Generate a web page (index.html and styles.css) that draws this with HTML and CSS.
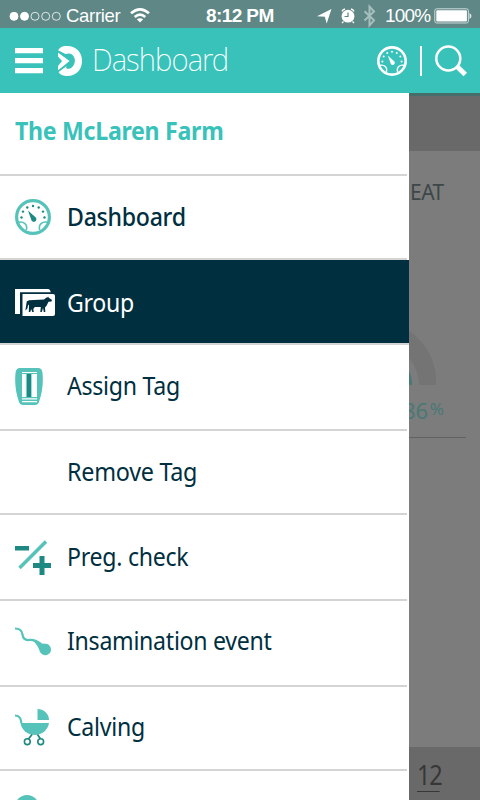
FILE: index.html
```html
<!DOCTYPE html>
<html lang="en">
<head>
<meta charset="utf-8">
<title>Dashboard</title>
<link rel="stylesheet" href="styles.css">
</head>
<body>
<div class="phone">
  <div class="status">
    <svg class="signal" width="53" height="28" viewBox="0 0 53 28"><g fill="#fff" stroke="#fff"><circle cx="5" cy="16.3" r="4"/><circle cx="15.5" cy="16.3" r="4"/><g fill="none" stroke-width=".8"><circle cx="26" cy="16.3" r="4"/><circle cx="36.7" cy="16.3" r="4"/><circle cx="47.3" cy="16.3" r="4"/></g></g></svg>
    <span class="carrier">Carrier</span>
    <svg class="wifi" width="20" height="28" viewBox="0 0 20 28" fill="none" stroke="#fff" stroke-width="2.6"><path d="M1 13.3Q10 5.500 19 13.300M4.700 17Q10 12.200 15.300 17"/><path d="M10 22.500 6.800 19.300Q10 17 13.200 19.300z" fill="#fff" stroke="none"/></svg>
    <span class="clock">8:12 PM</span>
    <svg class="stat-icons" width="62" height="28" viewBox="0 0 62 28"><path fill="#fff" d="M1 16.300 15.500 9 10.700 23.500 8.800 16.700z"/><circle cx="32" cy="16.200" r="6.400" fill="#fff"/><path d="M26 11.500Q26.500 9.500 29 9M38 11.500Q37.500 9.500 35 9M27.500 21.500l-1.500 1.500M36.500 21.500l1.500 1.500" fill="none" stroke="#fff" stroke-width="1.300"/><path d="M32 12.500v4h-3.500" fill="none" stroke="#5e8785" stroke-width="1.200"/><path d="m48.500 11.300 9.500 9-4.500 5V6.500l4.500 5-9.500 9" fill="none" stroke="#a6bfbd" stroke-width="2"/></svg>
    <span class="percent">100%</span>
    <svg class="battery" width="38" height="28" viewBox="0 0 38 28"><rect x=".8" y="8.800" width="33.600" height="14.200" rx="1.800" fill="none" stroke="#cddada"/><rect x="2.300" y="10.300" width="30.600" height="11.200" rx=".7" fill="#fff"/><path d="M35.500 13q2 1 2 3t-2 3z" fill="#d9e4e4"/></svg>
  </div>
  <header class="bar">
    <svg class="burger" width="28" height="26" viewBox="0 0 28 26" fill="#fff"><path d="M0 0h28v5.300H0zM0 10h28v5.300H0zM0 20h28v5.300H0z"/></svg>
    <svg class="brand" width="26" height="32" viewBox="0 0 26 32"><path fill="#fff" d="M1 5.200C4 1 7 1 10 1 20 1 25 8 25 16S20 31 10 31C6 31 3 29.500 1.500 27L10 20.800C7 24 12 25 15 22.200 19 18.500 18.700 12.500 15 9.500 13 8 11 8.300 8.500 9z"/><path fill="#fff" d="m1 7.500 11.500 8.600L1 25.500V21l4-5-4-4.500z"/><path d="m1 6.300 7 5.200M1.200 26.200l6.500-5" stroke="#38c2ba" stroke-width="1.200"/></svg>
    <h1>Dashboard</h1>
    <svg class="bar-gauge" width="30" height="30" viewBox="0 0 36 36"><use href="#gauge"/></svg>
    <i class="divider"></i>
    <svg class="search" width="32" height="32" viewBox="0 0 32 32" fill="none" stroke="#fff"><circle cx="13.300" cy="13.500" r="12" stroke-width="2.500"/><path d="m22 21.500 8.300 8" stroke-width="5"/></svg>
  </header>
  <main class="body">
    <nav class="menu">
      <div class="row title"><span>The McLaren Farm</span></div>
      <a class="row r-dash"><svg class="icon gauge" width="36" height="36" viewBox="0 0 36 36"><g id="gauge"><circle class="ring" cx="18" cy="18" r="16.400" fill="none" stroke-width="3.200"/><path class="ring" d="M3.500 23.200C8.500 22 13 25.500 11.300 31M32.500 23.200C27.500 22 23 25.500 24.700 31" fill="none" stroke-width="1.600"/><path class="needle" d="M13 11.500 20.200 18a2.600 2.600 0 1 1-4 2.400z"/><g class="needle"><circle cx="18" cy="7" r="1.200"/><circle cx="12.300" cy="8.500" r="1.200"/><circle cx="23.700" cy="8.500" r="1.200"/><circle cx="8" cy="12.600" r="1.200"/><circle cx="28" cy="12.600" r="1.200"/><circle cx="6.500" cy="18.500" r="1.200"/><circle cx="29.500" cy="18.500" r="1.200"/></g></g></svg><span>Dashboard</span></a>
      <a class="row r-group"><svg class="icon" width="40" height="28" viewBox="0 0 40 28"><path fill="#fff" d="M0 0h33q2 0 2.700 3.200H5V25H0z"/><path fill="#fff" d="M7.500 5H38q2 0 2 2v18q0 2-2 2H7.500z"/><path fill="#002f3f" d="M14 11.300 29 10.500l2.500-2h1l.5-1 .8 1.200L37 11l-.5 1.500-3 .3-2 4-1.500 1.700.3 4.500h-1.500l-.8-4-1.200 4h-1.500l.5-5h-6l-1.500 2 .5 3h-1.500l-1.200-3-.8 3h-1.500l.2-6.500-.8-1-.8 4-2 2 1.300-9z"/></svg><span>Group</span></a>
      <a class="row r-assign"><svg class="icon" width="28" height="37" viewBox="0 0 28 37"><path fill="#56c3ba" d="M5 0h18q4 0 4.500 5 1.500 15-3.500 29-1 3-4 3H8q-3 0-4-3Q-1 20 .5 5 1 0 5 0z"/><path fill="#fff" d="M7 4h15v1H7zM7 6h15v23H7zM7 30.300h15v1.200H7zM7 33h15v1.200H7z"/><path fill="#56c3ba" d="M10.800 6h1.300v23h-1.300zM15.800 6h1.300v23h-1.300z" opacity=".6"/><path fill="#1d8982" d="M11.800 6h4.200v23h-4.200z"/></svg><span>Assign Tag</span></a>
      <a class="row r-remove"><span>Remove Tag</span></a>
      <a class="row r-preg"><svg class="icon" width="36" height="35" viewBox="0 0 36 35"><path d="M4.500 28 31 1.500" stroke="#56c3ba" stroke-width="3.500"/><path fill="#1d8982" d="M0 6h14v4.500H0zM24.500 16h5v7H36v5h-6.500v7h-5v-7H18v-5h6.500z"/></svg><span>Preg. check</span></a>
      <a class="row r-insem"><svg class="icon" width="36" height="29" viewBox="0 0 36 29"><path d="M0 1.500c5 0 7 2 7.500 6s2.500 6 6.500 5.500 8 1 12 4" fill="none" stroke="#56c3ba" stroke-width="2.200"/><path fill="#56c3ba" d="M18 13q6 4 13 3.700a5.700 5.700 0 0 1 5 5.800 5.800 5.800 0 0 1-10.500 3.300C24 23.500 24 19 18 14z"/></svg><span>Insamination event</span></a>
      <a class="row r-calving"><svg class="icon" width="35" height="37" viewBox="0 0 35 37"><path fill="#56c3ba" d="M22.500 0A11.500 11 0 0 1 34 11H22.500zM5.500 14H34C33 21 27 26 19.800 26S6.500 21 5.500 14z"/><path d="M0 6.500Q6 6.500 6.300 14" fill="none" stroke="#56c3ba" stroke-width="2.200"/><path d="M17 25.500 13.500 30M22.500 25.500l3 4.500" stroke="#1d8982" stroke-width="1.800"/><g fill="none" stroke="#1d8982" stroke-width="1.600"><circle cx="12.300" cy="32.700" r="2.900"/><circle cx="25.700" cy="32.700" r="2.900"/></g></svg><span>Calving</span></a>
      <a class="row r-next"><svg class="icon" width="24" height="24" viewBox="0 0 24 24"><circle cx="12" cy="12" r="12" fill="#56c3ba"/></svg></a>
    </nav>
    <section class="page">
      <div class="tabs"></div>
      <div class="card">
        <h2>EAT</h2>
        <svg class="dial" width="71" height="70" viewBox="0 0 71 70"><path d="M0 11A60 60 0 0 1 27 65H10A44 44 0 0 0 0 38z" fill="#747474"/><path d="M0 51q3 6 3 14H0z" fill="#487976"/></svg>
        <p class="value"><b>86</b><small>%</small></p>
      </div>
      <footer><span>12</span></footer>
    </section>
  </main>
</div>
</body>
</html>
```
FILE: styles.css
```css
* { box-sizing: border-box; }
body { margin: 0; font-family: "Noto Sans", "Open Sans", sans-serif; }
.phone { width: 480px; height: 800px; overflow: hidden; display: flex; flex-direction: column; }
svg { display: block; flex: none; }
.status { height: 28px; flex: none; background: #5e8785; color: #fff; display: flex; align-items: center; padding-left: 9px; font: 19px/28px "Liberation Sans", sans-serif; white-space: nowrap; }
.status span { padding-top: 4px; }
.carrier { width: 64px; margin-left: 4px; font-size: 18.500px; letter-spacing: -.3px; }
.clock { width: 70px; margin-left: 56px; font-weight: bold; letter-spacing: -.6px; }
.stat-icons { margin-left: 40px; }
.percent { width: 48px; margin-left: 7px; letter-spacing: -.8px; }
.battery { margin-left: 1px; }
.bar { height: 65px; flex: none; background: #38c2ba; color: #fff; display: flex; align-items: center; padding-left: 15px; }
.brand { margin-left: 14px; }
h1 { margin: 0 0 3px 9px; width: 140px; font-size: 32px; font-weight: 200; line-height: 44px; letter-spacing: -1px; transform: scaleX(.92); transform-origin: 0 50%; }
.bar-gauge { margin-left: 145px; --ring: #fff; --needle: #fff; }
.divider { width: 2px; height: 30px; margin-left: 13px; background: #fff; }
.search { margin-left: 13px; }
.body { flex: 1; display: flex; min-height: 0; }
.menu { width: 409px; flex: none; background: #fff; overflow: hidden; --ring: #56c3ba; --needle: #1d8982; }
.ring { stroke: var(--ring); }
.needle { fill: var(--needle); }
.row { display: grid; grid-template-columns: 52px 1fr; align-items: center; width: 407px; height: 86px; padding-left: 15px; border-bottom: 2px solid #d4d4d4; color: #002f3f; font-size: 25px; line-height: 34px; white-space: nowrap; }
.row span { grid-column: 2; padding-bottom: 3px; transform-origin: 0 50%; transform: scaleX(.925); letter-spacing: -.3px; }
.title { height: 83px; display: flex; color: #38c2ba; font-weight: 700; padding-bottom: 4px; }
.r-dash { height: 84px; font-weight: 500; }
.r-group { width: 409px; height: 85px; background: #002f3f; color: #fff; padding-top: 3px; }
.r-group span { padding-bottom: 2px; }
.r-assign { padding-bottom: 2px; }
.r-remove { height: 84px; }
.r-remove span { transform: scaleX(.935); }
.r-insem { padding-bottom: 3px; }
.r-calving { height: 84px; padding-bottom: 2px; }
.r-next { align-items: start; padding-top: 24px; }
.page { width: 71px; display: flex; flex-direction: column; background: #7c7c7c; overflow: hidden; color: #3e4747; }
.tabs { height: 58px; flex: none; background: #696969; border-top: 3px solid #456e6b; }
.card { flex: 1; }
h2 { margin: 26px 0 0 1px; font-weight: 400; font-size: 21px; line-height: 30px; letter-spacing: -.5px; }
.dial { margin-top: 113px; }
.value { margin: -5px 14px 0 -6px; height: 53px; display: flex; align-items: flex-start; border-bottom: 1px solid #626262; color: #487976; line-height: 50px; }
.value b { font-weight: 400; font-size: 22px; letter-spacing: -.2px; }
.value small { font-size: 17px; margin-left: 2px; line-height: 47px; }
footer { height: 53px; flex: none; background: #696969; color: #373737; padding: 11px 0 0 8px; }
footer span { display: block; width: 27px; border-bottom: 1px solid #373737; font-size: 28px; line-height: 33px; letter-spacing: -1.500px; transform: scaleX(.84); transform-origin: 0 50%; }
```
